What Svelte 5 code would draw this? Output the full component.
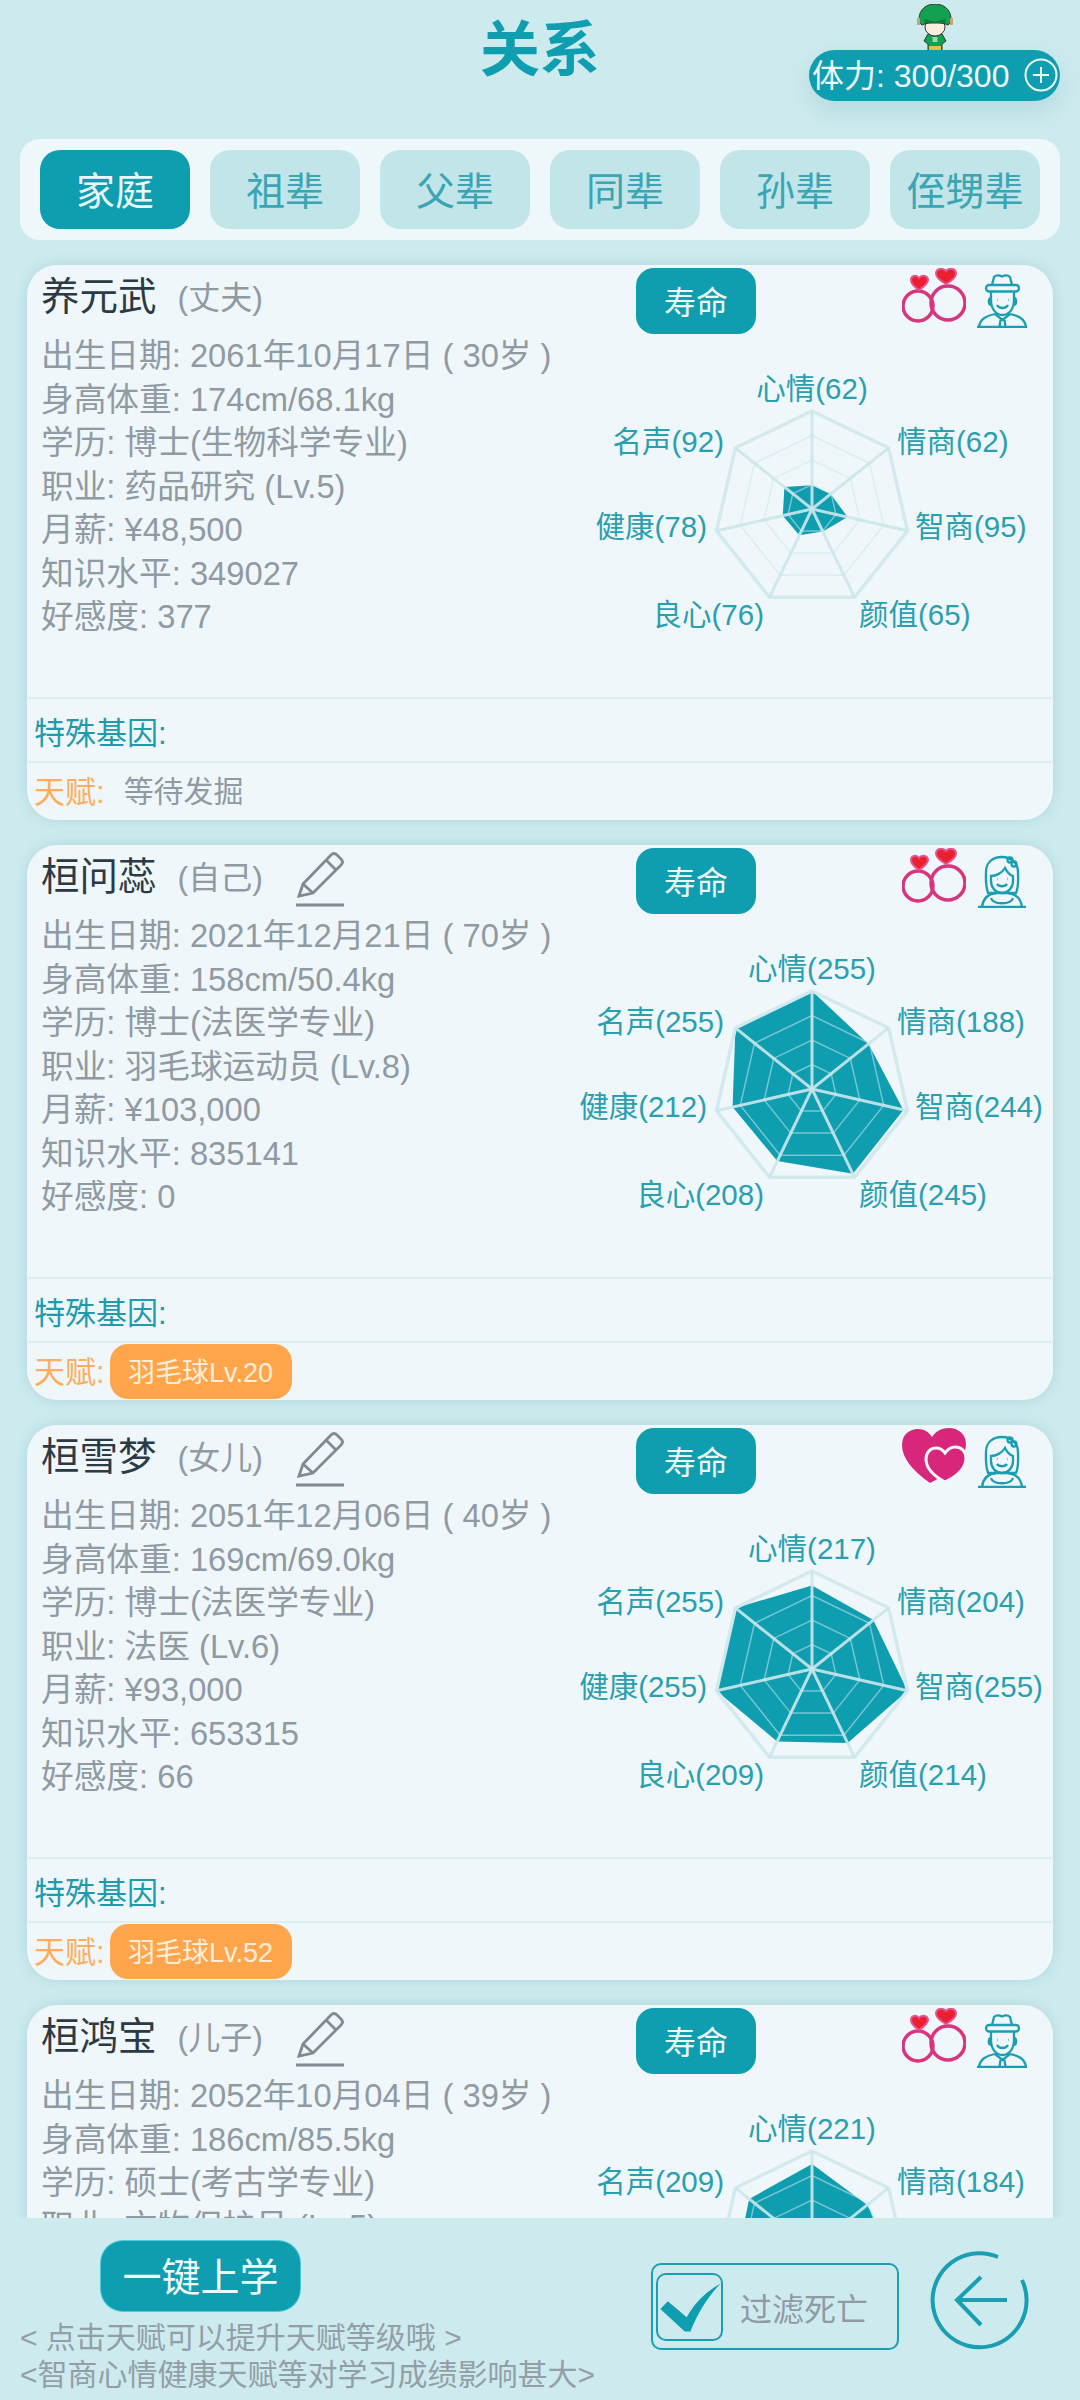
<script>
// Relationship screen: family cards with a seven-axis radar each.
const tabs = ["家庭", "祖辈", "父辈", "同辈", "孙辈", "侄甥辈"];
const axes = ["心情", "情商", "智商", "颜值", "良心", "健康", "名声"];

// Label placement around the radar, relative to its centre.
const labelPos = [
  { x: 0, y: -110, anchor: "middle" },
  { x: 85, y: -57, anchor: "start" },
  { x: 103, y: 28, anchor: "start" },
  { x: 47, y: 116, anchor: "start" },
  { x: -48, y: 116, anchor: "end" },
  { x: -105, y: 28, anchor: "end" },
  { x: -88, y: -57, anchor: "end" },
];

const people = [
  {
    name: "养元武", role: "丈夫", edit: false, male: true, bond: "rings",
    birth: "2061年10月17日 ( 30岁 )", body: "174cm/68.1kg", edu: "博士(生物科学专业)",
    job: "药品研究 (Lv.5)", pay: "¥48,500", know: "349027", fav: "377",
    stats: [62, 62, 95, 65, 76, 78, 92], talent: null,
  },
  {
    name: "桓问蕊", role: "自己", edit: true, male: false, bond: "rings",
    birth: "2021年12月21日 ( 70岁 )", body: "158cm/50.4kg", edu: "博士(法医学专业)",
    job: "羽毛球运动员 (Lv.8)", pay: "¥103,000", know: "835141", fav: "0",
    stats: [255, 188, 244, 245, 208, 212, 255], talent: "羽毛球Lv.20",
  },
  {
    name: "桓雪梦", role: "女儿", edit: true, male: false, bond: "hearts",
    birth: "2051年12月06日 ( 40岁 )", body: "169cm/69.0kg", edu: "博士(法医学专业)",
    job: "法医 (Lv.6)", pay: "¥93,000", know: "653315", fav: "66",
    stats: [217, 204, 255, 214, 209, 255, 255], talent: "羽毛球Lv.52",
  },
  {
    name: "桓鸿宝", role: "儿子", edit: true, male: true, bond: "rings",
    birth: "2052年10月04日 ( 39岁 )", body: "186cm/85.5kg", edu: "硕士(考古学专业)",
    job: "文物保护员 (Lv.5)", pay: "¥61,000", know: "412560", fav: "52",
    stats: [221, 184, 230, 210, 190, 205, 209], talent: null,
  },
];

const R = 98;
const CX = 232;
const CY = 161;

function vertex(i, r) {
  const a = (i * 2 * Math.PI) / 7;
  return [CX + r * Math.sin(a), CY - r * Math.cos(a)];
}
function ring(r) {
  return axes.map((_, i) => vertex(i, r).map((n) => n.toFixed(1)).join(",")).join(" ");
}
function shape(stats) {
  return stats.map((v, i) => vertex(i, (v / 255) * R).map((n) => n.toFixed(1)).join(",")).join(" ");
}
const spokes = axes.map((_, i) => vertex(i, R));
</script>

<div class="page">
  <header class="head">
    <h1>关系</h1>
    <div class="stamina-wrap">
      <svg class="mascot" viewBox="0 0 36 46" aria-hidden="true">
        <path d="M11 30h14l4 7-4 3v6H11v-6l-4-3z" fill="#12a150" stroke="#2c3a2a" stroke-width="1"/>
        <rect x="12" y="42" width="12" height="4" fill="#e4c23a"/>
        <rect x="15.500" y="33" width="5" height="5" fill="#8fdcae"/>
        <ellipse cx="18" cy="23" rx="10" ry="9" fill="#fbeee0" stroke="#3a3a30" stroke-width="1"/>
        <path d="M2 15C2 5 10 0 18 0s16 5 16 15c0 3-1 5-3 6-4-2-8-2-13-2s-9 0-13 2c-2-1-3-3-3-6z" fill="#12a150" stroke="#2c3a2a" stroke-width="1"/>
        <path d="M8 19l-1-4 6 1.500 5 1 5-1 6-1.500-1 4c-6-1-14-1-20 0z" fill="#0c7a3c"/>
        <rect x="0" y="14" width="3" height="7" fill="#c9a27a"/>
        <rect x="33" y="14" width="3" height="7" fill="#c9a27a"/>
      </svg>
      <div class="stamina">
        <span class="stamina-text">体力: 300/300</span>
        <svg class="plus" viewBox="0 0 34 34" aria-hidden="true">
          <circle cx="17" cy="17" r="15.500" />
          <path d="M17 9v16M9 17h16" />
        </svg>
      </div>
    </div>
  </header>

  <nav class="tabs">
    {#each tabs as t, i (t)}
      <button class="tab" class:active={i === 0}>{t}</button>
    {/each}
  </nav>

  <main class="list">
    {#each people as p (p.name)}
      <article class="card">
        <div class="main">
          <div class="info">
            <div class="title-row">
              <span class="name">{p.name}</span>
              <span class="role">({p.role})</span>
              {#if p.edit}
                <svg class="pencil" viewBox="0 0 50 56" aria-hidden="true">
                  <path d="M4 45L8 33 36 4q3-3 6 0l4 4q3 3 0 6L18 42z" />
                  <path d="M8 33l10 9M31 9l10 10" />
                  <path d="M1 54h48" />
                </svg>
              {/if}
            </div>
            <p>出生日期: {p.birth}</p>
            <p>身高体重: {p.body}</p>
            <p>学历: {p.edu}</p>
            <p>职业: {p.job}</p>
            <p>月薪: {p.pay}</p>
            <p>知识水平: {p.know}</p>
            <p>好感度: {p.fav}</p>
          </div>

          <div class="side">
            <div class="side-head">
              <button class="life">寿命</button>
              <div class="badges">
                {#if p.bond === "rings"}
                  <svg class="bond" viewBox="0 0 64 56" aria-hidden="true">
                    <circle cx="16" cy="38" r="15" class="ring" />
                    <circle cx="46" cy="35" r="17" class="ring" />
                    <path d="M17 22C11 18 9 15 9 12 9 8 14 6 17 10c3-4 9-2 9 2 0 3-3 6-9 10z" class="gem" />
                    <path d="M44 16C37 12 34 9 34 5.500 34 1 40-1 44 3c4-4 10-2 10 2.500 0 3.500-3 6.500-10 10.500z" class="gem" />
                  </svg>
                {:else}
                  <svg class="bond" viewBox="0 0 64 56" aria-hidden="true">
                    <path d="M28 55C10 42 0 30 0 17 0 6 8 1 16 1c6 0 11 3 14 8 4-6 10-9 17-9 9 0 17 6 17 16 0 14-14 28-36 39z" fill="#d8267a"/>
                    <path d="M43 54C30 47 24 39 24 31c0-7 5-11 10-11 4 0 7 2 9 5 3-4 6-6 10-6 6 0 11 4 11 11 0 10-8 18-21 24z" fill="#d8267a" stroke="#f0f7fa" stroke-width="3"/>
                  </svg>
                {/if}
                {#if p.male}
                  <svg class="avatar" viewBox="0 0 50 54" aria-hidden="true">
                    <path d="M15 11l2-8q3-3 8-.5 5-2.500 8 .5l2 8" />
                    <rect x="9" y="11" width="33" height="6.500" rx="3.200" />
                    <path d="M14 18v8c0 9 5 15 11.500 15S37 35 37 26v-8" />
                    <path d="M14 24c-3 0-3 7 .5 7M37 24c3 0 3 7-.5 7" />
                    <path d="M20 31c2 4 9 4 11 0" />
                    <path d="M20 26h.5M31 26h.5" />
                    <path d="M18 40c-9 2-15 5-16 13M33 40c9 2 15 5 16 13M0 53h50M18 40l7.500 6 7.500-6M23.500 46l-1 7M27.500 46l1 7" />
                  </svg>
                {:else}
                  <svg class="avatar" viewBox="0 0 50 54" aria-hidden="true">
                    <path d="M11 39C8 30 9 22 9 18 9 8 16 3 25 3s16 6 16 15c0 6 1 14-2 21z" />
                    <path d="M14 22c5 0 11-3 14-8 2 4 5 7 8 8v5c0 7-5 12-11 12s-11-5-11-12z" />
                    <path d="M20 30c2 3 8 3 10 0" />
                    <path d="M20 25h.5M30 25h.5" />
                    <path d="M19 39c-8 1-13 5-14 14M31 39c8 1 13 5 14 14M1 53h48M14 44c2 7 20 7 22 0" />
                    <circle cx="33" cy="6" r="2.500" /><circle cx="37" cy="10" r="2.500" />
                  </svg>
                {/if}
              </div>
            </div>

            <svg class="radar" viewBox="0 0 473 345" aria-label="属性">
              <polygon class="fill" points={shape(p.stats)} />
              <polygon class="grid-outer" points={ring(R)} />
              <polygon class="grid" points={ring(R * 0.75)} />
              <polygon class="grid" points={ring(R * 0.5)} />
              <polygon class="grid" points={ring(R * 0.25)} />
              {#each spokes as s}
                <line class="spoke" x1={CX} y1={CY} x2={s[0]} y2={s[1]} />
              {/each}
              {#each axes as a, i (a)}
                <text
                  x={CX + labelPos[i].x}
                  y={CY + labelPos[i].y}
                  text-anchor={labelPos[i].anchor}
                >{a}({p.stats[i]})</text>
              {/each}
            </svg>
          </div>
        </div>

        <div class="row gene">特殊基因:</div>
        <div class="row gift">
          <span class="gift-label">天赋:</span>
          {#if p.talent}
            <button class="talent">{p.talent}</button>
          {:else}
            <span class="waiting">等待发掘</span>
          {/if}
        </div>
      </article>
    {/each}
  </main>

  <footer class="foot">
    <div class="foot-left">
      <button class="school">一键上学</button>
      <p>&lt; 点击天赋可以提升天赋等级哦 &gt;</p>
      <p>&lt;智商心情健康天赋等对学习成绩影响甚大&gt;</p>
    </div>
    <div class="filter">
      <span class="check">
        <svg viewBox="0 0 66 68" aria-hidden="true">
          <path d="M2 36l8-8 20 17C38 30 50 18 66 9 52 24 42 40 34 60h-6z" />
        </svg>
      </span>
      <span>过滤死亡</span>
    </div>
    <svg class="back" viewBox="0 0 100 100" aria-hidden="true">
      <path d="M68 7A47 47 0 1 0 92 30" />
      <path d="M77 50H27M51 27L27 50l24 25" />
    </svg>
  </footer>
</div>

<style>
:global(body) {
  margin: 0;
  background: #cdebef;
}
.page {
  width: 1080px;
  height: 2400px;
  display: flex;
  flex-direction: column;
  overflow: hidden;
  background: #cdebef;
  font-family: "Liberation Sans", "Noto Sans CJK SC", sans-serif;
  color: #8f9aa3;
}
button {
  appearance: none;
  border: none;
  padding: 0;
  font-family: inherit;
}

.head {
  position: relative;
  height: 139px;
  flex: none;
}
.head h1 {
  margin: 0;
  padding-top: 9px;
  text-align: center;
  font-size: 60px;
  line-height: 84px;
  font-weight: 700;
  color: #0f9db0;
}
.stamina-wrap {
  position: absolute;
  top: 4px;
  right: 20px;
  width: 251px;
}
.mascot {
  display: block;
  width: 36px;
  height: 46px;
  margin-left: 108px;
}
.stamina {
  height: 51px;
  border-radius: 26px;
  background: #0f9db0;
  color: #eef9fb;
  font-size: 32px;
  display: flex;
  align-items: center;
  justify-content: space-between;
  padding: 0 2px 0 3px;
  box-shadow: 0 10px 24px rgba(70, 140, 150, 0.18);
}
.stamina-text {
  margin-bottom: 6px;
}
.plus {
  width: 34px;
  height: 34px;
  margin-bottom: 2px;
  fill: none;
  stroke: #eef9fb;
  stroke-width: 2;
}

.tabs {
  flex: none;
  box-sizing: border-box;
  margin: 0 20px;
  height: 101px;
  padding: 11px 20px;
  display: flex;
  gap: 20px;
  border-radius: 20px;
  background: #eef7fa;
}
.tab {
  width: 150px;
  height: 79px;
  padding-bottom: 4px;
  border-radius: 20px;
  background: #c2e5ea;
  color: #3ba5b3;
  font-size: 39px;
}
.tab.active {
  background: #0f9db0;
  color: #e8f7f9;
}

.list {
  flex: none;
  height: 1978px;
  box-sizing: border-box;
  padding: 25px 27px 0;
  overflow: hidden;
  display: flex;
  flex-direction: column;
  gap: 25px;
}
.card {
  flex: none;
  height: 555px;
  display: flex;
  flex-direction: column;
  border-radius: 30px;
  background: #eff7fa;
  box-shadow: 0 0 14px rgba(70, 140, 150, 0.22);
}

.main {
  height: 432px;
  flex: none;
  display: flex;
}
.info {
  width: 553px;
  box-sizing: border-box;
  padding: 6px 0 0 14px;
  font-size: 32.700px;
}
.info p {
  margin: 0;
  line-height: 43.500px;
  white-space: nowrap;
}
.title-row {
  display: flex;
  align-items: flex-start;
  height: 63px;
}
.name {
  font-size: 38.500px;
  line-height: 52px;
  color: #2b3a44;
}
.role {
  margin-left: 21px;
  margin-top: 1px;
  line-height: 52px;
  font-size: 32px;
}
.pencil {
  width: 50px;
  height: 56px;
  margin: 0 0 0 32px;
  fill: none;
  stroke: #7f8a92;
  stroke-width: 2.800;
}
.side {
  width: 473px;
  flex: none;
  display: flex;
  flex-direction: column;
}
.side-head {
  height: 80px;
  flex: none;
  display: flex;
  justify-content: space-between;
  align-items: flex-start;
  padding: 3px 26px 0 56px;
}
.life {
  width: 120px;
  height: 66px;
  padding-bottom: 2px;
  border-radius: 18px;
  background: #0f9db0;
  color: #eef9fb;
  font-size: 32px;
}
.badges {
  display: flex;
  gap: 11px;
}
.bond {
  width: 64px;
  height: 56px;
}
.ring {
  fill: none;
  stroke: #d9347f;
  stroke-width: 3.500;
}
.gem {
  fill: #ea2030;
  stroke: #e2558f;
  stroke-width: 2;
}
.avatar {
  width: 50px;
  height: 54px;
  margin-top: 6px;
  fill: none;
  stroke: #1a9fb2;
  stroke-width: 2.300;
}
.radar {
  display: block;
  width: 473px;
  height: 345px;
  font-size: 29.500px;
  overflow: visible;
}
.radar text {
  fill: #2a9fb0;
}
.fill {
  fill: #0f9db0;
}
.grid-outer {
  fill: none;
  stroke: #d2eaee;
  stroke-width: 3.500;
}
.grid {
  fill: none;
  stroke: rgba(200, 232, 237, 0.55);
  stroke-width: 1.500;
}
.spoke {
  stroke: #cbe8ec;
  stroke-width: 3;
  opacity: 0.9;
}

.row {
  display: flex;
  align-items: center;
  box-sizing: border-box;
  padding-left: 7px;
  border-top: 2px solid #dfeef1;
  font-size: 31px;
}
.gene {
  height: 64px;
  color: #1f9bad;
}
.gift {
  height: 59px;
  color: #ffad5c;
}
.gift-label {
  margin-bottom: 5px;
}
.talent {
  width: 182px;
  height: 55px;
  margin-left: 5px;
  padding-bottom: 3px;
  border-radius: 18px;
  background: #ffa64d;
  color: #fdeeda;
  font-size: 27px;
}
.waiting {
  margin: 0 0 5px 19px;
  font-size: 30px;
  color: #8f9aa3;
}

.foot {
  flex: 1;
  position: relative;
  display: flex;
  background: #cdebef;
}
.foot-left {
  width: 651px;
  flex: none;
  padding: 23px 0 0 20px;
  box-sizing: border-box;
}
.foot-left p {
  margin: 0;
  font-size: 30px;
  line-height: 37px;
  white-space: nowrap;
  color: #939fa6;
}
.school {
  display: block;
  width: 199px;
  height: 70px;
  margin: 0 0 8px 81px;
  padding-bottom: 4px;
  border-radius: 22px;
  background: #0f9db0;
  color: #eef9fb;
  font-size: 39px;
  box-shadow: 0 0 0 1px #4ecbd9;
}
.filter {
  width: 248px;
  height: 87px;
  flex: none;
  margin-top: 45px;
  box-sizing: border-box;
  display: flex;
  align-items: center;
  gap: 17px;
  padding-left: 3px;
  border: 2.500px solid #1a9fb2;
  border-radius: 10px;
  font-size: 32px;
}
.check {
  width: 67px;
  height: 68px;
  box-sizing: border-box;
  border: 2px solid #1a9fb2;
  border-radius: 10px;
}
.check svg {
  display: block;
  width: 100%;
  height: 100%;
  fill: #0f9db0;
}
.back {
  width: 100px;
  height: 100px;
  flex: none;
  margin: 32px 0 0 31px;
  fill: none;
  stroke: #1a9fb2;
  stroke-width: 4;
}
</style>
